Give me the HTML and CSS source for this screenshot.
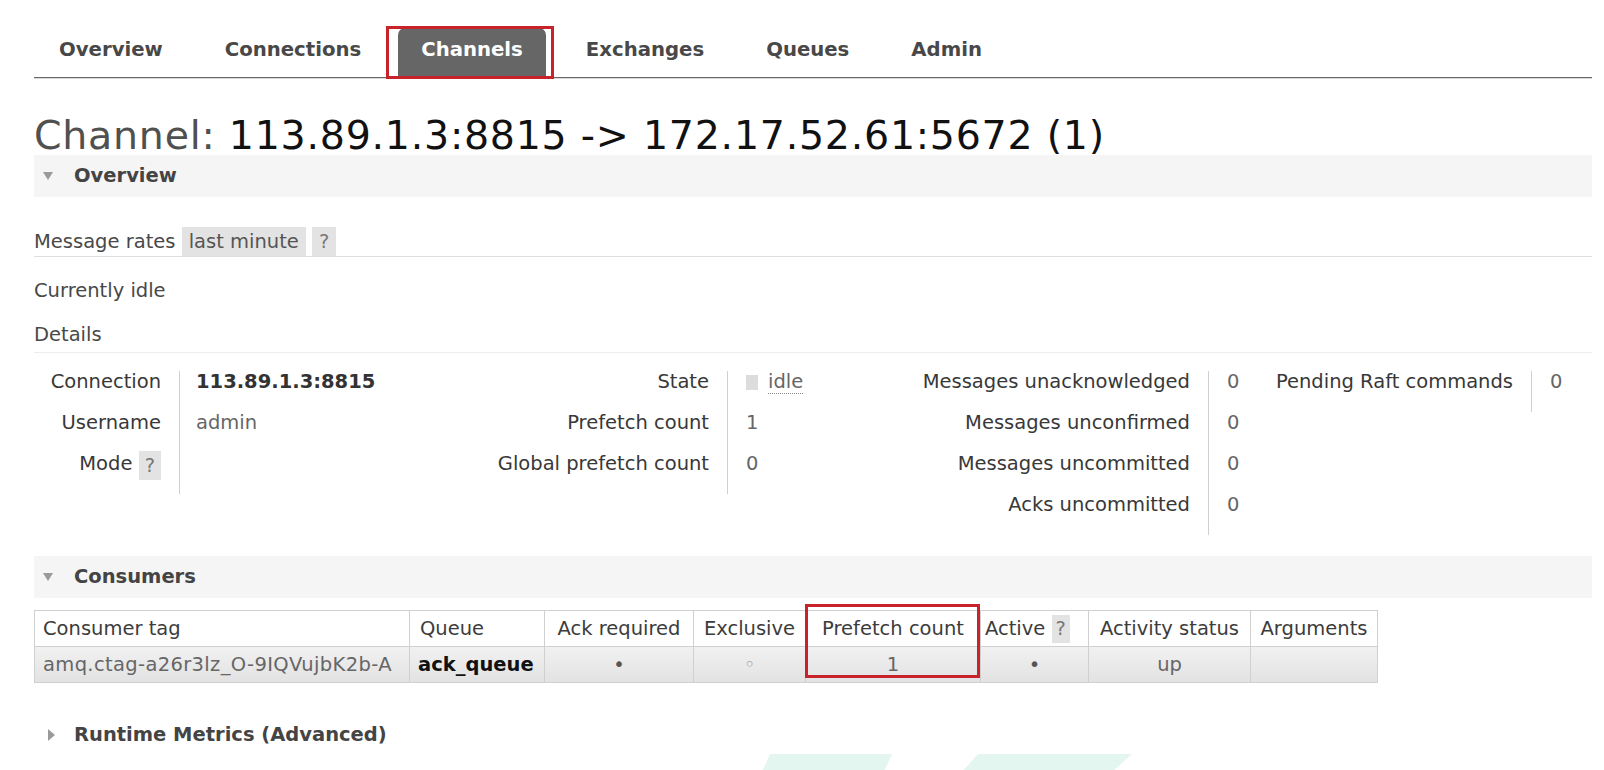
FILE: index.html
```html
<!DOCTYPE html>
<html lang="en">
<head>
<meta charset="utf-8">
<title>Channel: 113.89.1.3:8815 -&gt; 172.17.52.61:5672 (1)</title>
<link rel="stylesheet" href="styles.css">
</head>
<body>
<div class="page">
  <nav class="nav">
    <ul class="tabs">
      <li class="tab"><a>Overview</a></li>
      <li class="tab"><a>Connections</a></li>
      <li class="tab tab-active"><a>Channels</a></li>
      <li class="tab"><a>Exchanges</a></li>
      <li class="tab"><a>Queues</a></li>
      <li class="tab"><a>Admin</a></li>
    </ul>
    <div class="mark mark-nav"></div>
  </nav>

  <h1 class="title"><span class="title-label">Channel:</span> <span class="title-name">113.89.1.3:8815 -&gt; 172.17.52.61:5672 (1)</span></h1>

  <section class="section">
    <h2 class="section-bar"><svg class="tri" width="10" height="8" viewBox="0 0 10 8"><polygon points="0,0 10,0 5,8" fill="#9a9a9a"/></svg>Overview</h2>
    <div class="rates-row">Message rates <span class="chip">last minute</span> <span class="chip chip-help">?</span></div>
    <p class="idle">Currently idle</p>
    <h3 class="details-title">Details</h3>
    <div class="facts-row">
      <dl class="facts facts-1">
        <dt>Connection</dt><dd class="strong">113.89.1.3:8815</dd>
        <dt>Username</dt><dd>admin</dd>
        <dt>Mode <span class="chip chip-help">?</span></dt><dd></dd>
      </dl>
      <dl class="facts facts-2">
        <dt>State</dt><dd><span class="state-box"></span><abbr class="state">idle</abbr></dd>
        <dt>Prefetch count</dt><dd>1</dd>
        <dt>Global prefetch count</dt><dd>0</dd>
      </dl>
      <dl class="facts facts-3">
        <dt>Messages unacknowledged</dt><dd>0</dd>
        <dt>Messages unconfirmed</dt><dd>0</dd>
        <dt>Messages uncommitted</dt><dd>0</dd>
        <dt>Acks uncommitted</dt><dd>0</dd>
      </dl>
      <dl class="facts facts-4">
        <dt>Pending Raft commands</dt><dd>0</dd>
      </dl>
    </div>
  </section>

  <section class="section">
    <h2 class="section-bar section-consumers"><svg class="tri" width="10" height="8" viewBox="0 0 10 8"><polygon points="0,0 10,0 5,8" fill="#9a9a9a"/></svg>Consumers</h2>
    <div class="consumers-wrap">
      <table class="consumers">
        <colgroup>
          <col class="c-tag"><col class="c-queue"><col class="c-ack"><col class="c-excl"><col class="c-prefetch"><col class="c-active"><col class="c-status"><col class="c-args">
        </colgroup>
        <thead>
          <tr>
            <th>Consumer tag</th>
            <th class="th-queue">Queue</th>
            <th class="center">Ack required</th>
            <th class="center">Exclusive</th>
            <th class="center">Prefetch count</th>
            <th class="th-active">Active <span class="chip chip-help">?</span></th>
            <th class="center">Activity status</th>
            <th class="center">Arguments</th>
          </tr>
        </thead>
        <tbody>
          <tr>
            <td class="tag">amq.ctag-a26r3lz_O-9IQVujbK2b-A</td>
            <td class="queue">ack_queue</td>
            <td class="center dot">&#8226;</td>
            <td class="center ring">&#9702;</td>
            <td class="center">1</td>
            <td class="center dot">&#8226;</td>
            <td class="center">up</td>
            <td></td>
          </tr>
        </tbody>
      </table>
      <div class="mark mark-table"></div>
    </div>
  </section>

  <section class="section">
    <h2 class="section-bar section-runtime"><svg class="tri-right" width="7" height="12" viewBox="0 0 7 12"><polygon points="0,0 7,6 0,12" fill="#9a9a9a"/></svg>Runtime Metrics (Advanced)</h2>
  </section>
</div>
<svg class="watermark" width="380" height="20" viewBox="0 0 380 20"><polygon points="0,20 8,2 130,2 122,20" fill="#e3f6ef"/><polygon points="200,20 216,2 370,2 350,20" fill="#e3f6ef"/></svg>
</body>
</html>
```

FILE: styles.css
```css
html, body {
  margin: 0;
  padding: 0;
}

body {
  font-family: "DejaVu Sans", Verdana, sans-serif;
  font-size: 19.5px;
  color: #444;
  background: #fff;
  overflow: hidden;
}

.page {
  padding: 0 12px 0 34px;
}

/* ---------- navigation ---------- */
.nav {
  position: relative;
  margin-top: 28px;
}

.tabs {
  list-style: none;
  margin: 0;
  padding: 0;
  display: flex;
  border-bottom: 1px solid #6a6a6a;
  box-shadow: 0 1px 0 #d8d8d8;
}

.tab {
  margin-right: 12px;
}

.tab a {
  display: block;
  padding: 10px 25px 15px;
  line-height: 24px;
  font-size: 19.7px;
  font-weight: bold;
  color: #484848;
}

.tab-active {
  margin-right: 15px;
}

.tab-active a {
  padding-left: 23px;
  padding-right: 23px;
  background: #666;
  color: #fff;
  border-radius: 7px 7px 0 0;
}

.mark {
  position: absolute;
  border: 3px solid #c8232a;
  box-sizing: border-box;
}

.mark-nav {
  left: 352px;
  top: -2px;
  width: 168px;
  height: 53px;
}

/* ---------- title ---------- */
.title {
  margin: 37px 0 0;
  font-size: 39.5px;
  font-weight: normal;
  line-height: 40px;
  letter-spacing: 0.75px;
  color: #111;
  white-space: nowrap;
}

.title-label {
  color: #505050;
}

/* ---------- section headers ---------- */
.section-bar {
  margin: 0;
  display: flex;
  align-items: center;
  background: #f5f5f5;
  font-size: 19.5px;
  font-weight: bold;
  line-height: 22px;
  padding: 10px 0 10px 9px;
  color: #444;
}

.tri {
  margin-right: 21px;
  flex: none;
}

.tri-right {
  margin-left: 5px;
  margin-right: 19px;
  flex: none;
}

.section-consumers {
  margin-top: 21px;
}

.section-runtime {
  margin-top: 31px;
  background: transparent;
}

/* ---------- overview body ---------- */
.rates-row {
  margin-top: 30px;
  line-height: 29px;
  border-bottom: 1px solid #dedede;
  color: #484848;
}

.chip {
  display: inline-block;
  background: #e3e3e3;
  padding: 0 7px;
  color: #555;
}

.chip-help {
  padding: 0 7px;
  color: #777;
}

.idle {
  margin: 23px 0 0;
  line-height: 22px;
  color: #484848;
}

.details-title {
  margin: 22px 0 0;
  font-size: 19.5px;
  font-weight: normal;
  line-height: 22px;
  padding-bottom: 6px;
  border-bottom: 1px solid #eeeeee;
  color: #484848;
}

.facts-row {
  display: flex;
  margin-top: 18px;
}

.facts {
  display: grid;
  grid-auto-rows: 41px;
  margin: 0;
}

.facts-1 { grid-template-columns: 145px 281px; }
.facts-2 { grid-template-columns: 267px 153px; }
.facts-3 { grid-template-columns: 328px 42px; }
.facts-4 { grid-template-columns: 281px 50px; }

.facts dt {
  text-align: right;
  padding-right: 18px;
  line-height: 22px;
  color: #383838;
  white-space: nowrap;
}

.facts dt .chip-help {
  line-height: 29px;
  margin-top: -2px;
  vertical-align: top;
  padding: 0 6px;
}

.facts dd {
  margin: 0;
  border-left: 1px solid #cfcfcf;
  padding-left: 18px;
  line-height: 22px;
  color: #666;
  white-space: nowrap;
}

.facts-1 dd {
  padding-left: 16px;
}

.facts dd.strong {
  font-weight: bold;
  color: #333;
}

.state-box {
  display: inline-block;
  width: 12px;
  height: 15px;
  background: #dcdcdc;
  vertical-align: -2px;
  margin-right: 10px;
}

.state {
  text-decoration: none;
  border-bottom: 1px dotted #888;
}

/* ---------- consumers table ---------- */
.consumers-wrap {
  position: relative;
  margin-top: 12px;
  width: 1343px;
}

.consumers {
  width: 1343px;
  table-layout: fixed;
  border-collapse: collapse;
}

.c-tag { width: 375px; }
.c-queue { width: 135px; }
.c-ack { width: 149px; }
.c-excl { width: 112px; }
.c-prefetch { width: 175px; }
.c-active { width: 108px; }
.c-status { width: 162px; }
.c-args { width: 127px; }

.consumers tr {
  height: 36px;
}

.consumers th,
.consumers td {
  border: 1px solid #d0d0d0;
  padding: 0 8px;
  line-height: 22px;
  text-align: left;
  white-space: nowrap;
  overflow: hidden;
}

.consumers th {
  font-weight: normal;
  color: #3c3c3c;
  background: #fff;
}

.consumers .th-queue {
  padding-left: 10px;
}

.consumers .th-active {
  padding: 0 2px 0 4px;
}

.consumers th .chip-help {
  padding: 0 4px;
  line-height: 28px;
}

.consumers tbody tr {
  background: linear-gradient(to bottom, #f1f1f1, #e2e2e2);
}

.consumers td {
  color: #666;
}

.consumers td.tag {
  letter-spacing: 0.35px;
}

.consumers td.queue {
  font-weight: bold;
  color: #111;
}

.consumers .center {
  text-align: center;
}

.consumers td.dot {
  color: #555;
}

.consumers td.ring {
  color: #999;
}

.mark-table {
  left: 771px;
  top: -6px;
  width: 175px;
  height: 74px;
}

/* ---------- watermark ---------- */
.watermark {
  position: absolute;
  left: 762px;
  top: 752px;
}
```
